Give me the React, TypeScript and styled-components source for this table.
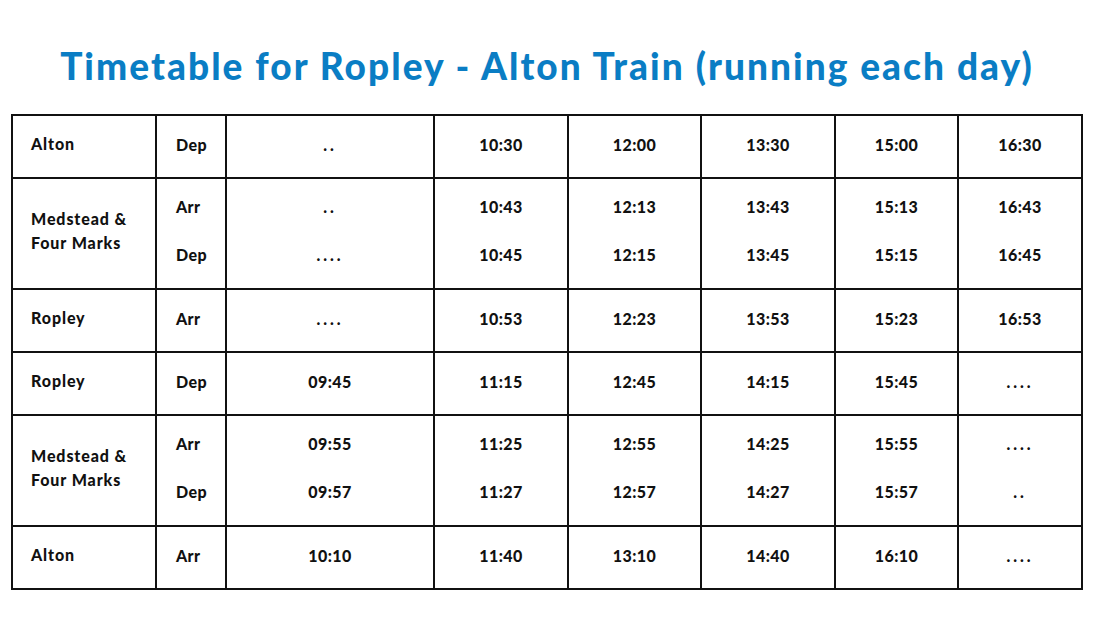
import React from 'react';
import styled, { createGlobalStyle } from 'styled-components';

const GlobalStyle = createGlobalStyle`
  html, body {
    margin: 0;
    padding: 0;
    background: #ffffff;
  }
  body {
    font-family: 'Lato', 'Open Sans', 'Liberation Sans', sans-serif;
  }
`;

const Page = styled.div`
  width: 1093px;
  height: 636px;
  box-sizing: border-box;
  padding: 44px 11px 0 12px;
  display: flex;
  flex-direction: column;
  align-items: center;
`;

const Title = styled.h1`
  margin: 0 0 26px 0;
  font-size: 37px;
  line-height: 44px;
  font-weight: 900;
  color: #0a7dc4;
  letter-spacing: 2.05px;
  white-space: nowrap;
`;

const Table = styled.table`
  border-collapse: collapse;
  border: 2px solid #111;
  table-layout: fixed;
  width: 1070px;
`;

const Row = styled.tr<{ $tall?: boolean }>`
  height: ${p => (p.$tall ? '111px' : '63px')};
`;

const Cell = styled.td<{ $align?: 'left' | 'center' }>`
  border: 2px solid #111;
  padding: 0 0 5px 0;
  text-align: ${p => p.$align ?? 'center'};
  vertical-align: middle;
  font-size: 16px;
  font-weight: 900;
  letter-spacing: 0.4px;
  color: #111;
`;

const StationCell = styled(Cell)`
  padding-left: 18px;
  line-height: 24px;
  letter-spacing: 0.9px;
`;

const KindCell = styled(Cell)`
  padding-left: 19px;
`;

const Stack = styled.div`
  display: flex;
  flex-direction: column;
  gap: 24px;
  line-height: 24px;
`;

const Dots = styled.span`
  letter-spacing: 3px;
`;

const widths = [144, 70, 208, 134, 133, 134, 123, 124];

const renderVal = (v: string) => (v.startsWith('.') ? <Dots>{v}</Dots> : v);

type RowData = {
  station: React.ReactNode;
  kinds: string[];
  times: string[][];
};

const rows: RowData[] = [
  { station: 'Alton', kinds: ['Dep'], times: [['..'], ['10:30'], ['12:00'], ['13:30'], ['15:00'], ['16:30']] },
  {
    station: <>Medstead &amp;<br />Four Marks</>,
    kinds: ['Arr', 'Dep'],
    times: [['..', '....'], ['10:43', '10:45'], ['12:13', '12:15'], ['13:43', '13:45'], ['15:13', '15:15'], ['16:43', '16:45']],
  },
  { station: 'Ropley', kinds: ['Arr'], times: [['....'], ['10:53'], ['12:23'], ['13:53'], ['15:23'], ['16:53']] },
  { station: 'Ropley', kinds: ['Dep'], times: [['09:45'], ['11:15'], ['12:45'], ['14:15'], ['15:45'], ['....']] },
  {
    station: <>Medstead &amp;<br />Four Marks</>,
    kinds: ['Arr', 'Dep'],
    times: [['09:55', '09:57'], ['11:25', '11:27'], ['12:55', '12:57'], ['14:25', '14:27'], ['15:55', '15:57'], ['....', '..']],
  },
  { station: 'Alton', kinds: ['Arr'], times: [['10:10'], ['11:40'], ['13:10'], ['14:40'], ['16:10'], ['....']] },
];

const Stacked: React.FC<{ items: string[] }> = ({ items }) =>
  items.length === 1 ? <>{renderVal(items[0])}</> : (
    <Stack>
      {items.map((it, i) => (
        <div key={i}>{renderVal(it)}</div>
      ))}
    </Stack>
  );

const App: React.FC = () => (
  <>
    <GlobalStyle />
    <Page>
      <Title>Timetable for Ropley - Alton Train (running each day)</Title>
      <Table>
        <colgroup>
          {widths.map((w, i) => (
            <col key={i} style={{ width: w }} />
          ))}
        </colgroup>
        <tbody>
          {rows.map((r, i) => (
            <Row key={i} $tall={r.kinds.length > 1}>
              <StationCell $align="left">{r.station}</StationCell>
              <KindCell $align="left">
                <Stacked items={r.kinds} />
              </KindCell>
              {r.times.map((t, j) => (
                <Cell key={j}>
                  <Stacked items={t} />
                </Cell>
              ))}
            </Row>
          ))}
        </tbody>
      </Table>
    </Page>
  </>
);

export default App;
